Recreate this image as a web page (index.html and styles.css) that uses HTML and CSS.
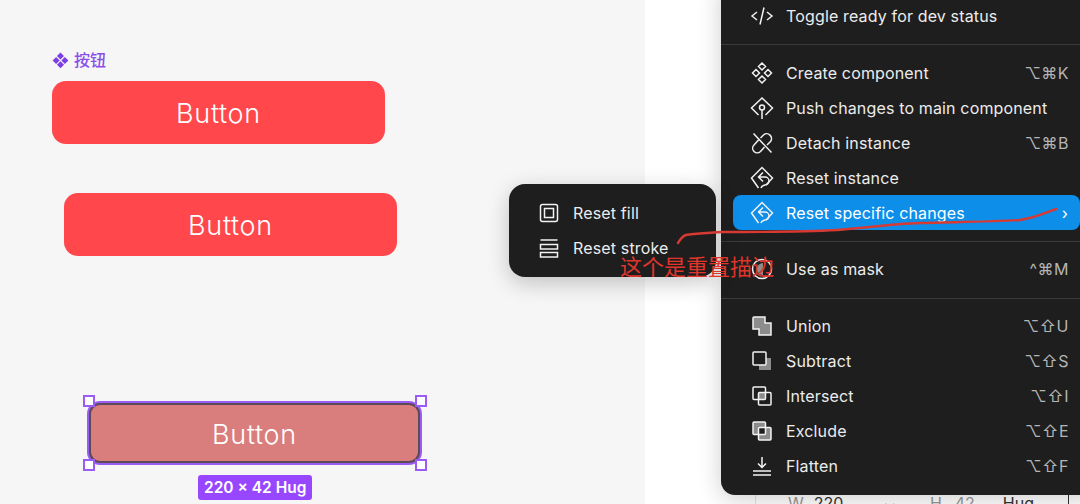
FILE: index.html
```html
<!DOCTYPE html>
<html lang="zh">
<head>
  <meta charset="UTF-8" />
  <title>Reset specific changes</title>
  <link rel="stylesheet" href="styles.css">
</head>
<body>

  <!-- ===== CANVAS ===== -->
  <div class="canvas">
    <div class="comp-label">
      <svg class="comp-icon" width="17" height="17" viewBox="0 0 16 16"><path d="M8 .5l3.300 3.300L8 7.100 4.700 3.800zM3.900 4.600l3.300 3.300-3.300 3.300L.6 7.900zM12.100 4.600l3.300 3.300-3.300 3.300-3.300-3.300zM8 8.700l3.300 3.300L8 15.300 4.700 12z" fill="#7b3fe4"/></svg>
      <span>按钮</span>
    </div>
    <div class="btn btn-one">Button</div>
    <div class="btn btn-two">Button</div>
    <div class="btn btn-selected">Button</div>
    <span class="handle h-tl"></span>
    <span class="handle h-tr"></span>
    <span class="handle h-bl"></span>
    <span class="handle h-br"></span>
    <div class="size-tag">220 × 42 Hug</div>
  </div>

  <!-- ===== PROPERTIES PANEL (behind the menu) ===== -->
  <div class="panel-strip">
    <span class="strip-w">W</span><span class="strip-val">220</span>
    <span class="strip-x">⌄</span>
    <span class="strip-h">H</span><span class="strip-val strip-dim">42</span>
    <span class="strip-hug">Hug</span>
    <span class="strip-box"></span>
  </div>

  <!-- ===== MAIN MENU ===== -->
  <div class="menu">
    <div class="row">
      <svg class="ico" viewBox="0 0 24 24"><path d="M7 8l-5 4 5 4M17 8l5 4-5 4M14 3.500l-4 17"/></svg>
      <span class="label">Toggle ready for dev status</span>
    </div>
    <hr>
    <div class="row">
      <svg class="ico" viewBox="0 0 24 24"><path d="M12 2l3.500 3.500L12 9 8.500 5.500zM6 8.500L9.500 12 6 15.500 2.500 12zM18 8.500l3.500 3.500-3.500 3.500-3.500-3.500zM12 15l3.500 3.500L12 22l-3.500-3.500z"/></svg>
      <span class="label">Create component</span>
      <span class="keys">⌥⌘K</span>
    </div>
    <div class="row">
      <svg class="ico" viewBox="0 0 24 24"><path d="M8.500 19L1.500 12 12 2l10.500 10-7 7M12 14v9"/><circle cx="12" cy="11.500" r="2.500"/></svg>
      <span class="label">Push changes to main component</span>
    </div>
    <div class="row">
      <svg class="ico" viewBox="0 0 24 24"><path d="M3.500 2.500l18 19M8.500 9l-4.500 5a4.500 4.500 0 0 0 6.500 6.500l4-4.500M10.500 7l3-3a4.800 4.800 0 0 1 7 6.500l-3.500 3.500"/></svg>
      <span class="label">Detach instance</span>
      <span class="keys">⌥⌘B</span>
    </div>
    <div class="row">
      <svg class="ico" viewBox="0 0 24 24"><use href="#reset-ico"/></svg>
      <span class="label">Reset instance</span>
    </div>
    <div class="row active">
      <svg class="ico" viewBox="0 0 24 24"><g id="reset-ico"><path d="M8.500 22L1.500 12 12 1.500 22.500 12 16 19"/><path d="M13 6.500L8.500 11l4.500 4.500M8.500 11H15a3.500 3.500 0 0 1 0 8c-2 .5-3.500 1-4 3"/></g></svg>
      <span class="label">Reset specific changes</span>
      <span class="chev">›</span>
    </div>
    <hr class="after-reset">
    <div class="row">
      <svg class="ico" viewBox="0 0 24 24"><circle cx="12" cy="12" r="9.500"/><path class="gray-fill" d="M13 6a6 6 0 0 0 0 12z"/></svg>
      <span class="label">Use as mask</span>
      <span class="keys">^⌘M</span>
    </div>
    <hr class="after-mask">
    <div class="row">
      <svg class="ico" viewBox="0 0 24 24"><path class="gray-fill" d="M3 3h12v6h6v12H9v-6H3z"/><path d="M9 15v6h12V9h-6V3H4a1 1 0 0 0-1 1v11z"/></svg>
      <span class="label">Union</span>
      <span class="keys">⌥⇧U</span>
    </div>
    <div class="row">
      <svg class="ico" viewBox="0 0 24 24"><path class="gray-fill" d="M16 9h5v12H9v-5h7z"/><rect x="3" y="3" width="13" height="13" rx="1"/></svg>
      <span class="label">Subtract</span>
      <span class="keys">⌥⇧S</span>
    </div>
    <div class="row">
      <svg class="ico" viewBox="0 0 24 24"><rect class="gray-fill" x="8.500" y="8.500" width="7" height="7"/><rect x="3" y="3" width="12.500" height="12.500" rx="1"/><rect x="8.500" y="8.500" width="12.500" height="12.500" rx="1"/></svg>
      <span class="label">Intersect</span>
      <span class="keys">⌥⇧I</span>
    </div>
    <div class="row">
      <svg class="ico" viewBox="0 0 24 24"><path class="gray-fill" d="M3 3h12.500v5.500h5.500V21H8.500v-5.500H3z"/><rect class="dark-fill" x="8.500" y="8.500" width="7" height="7"/><rect x="3" y="3" width="12.500" height="12.500" rx="1"/><rect x="8.500" y="8.500" width="12.500" height="12.500" rx="1"/></svg>
      <span class="label">Exclude</span>
      <span class="keys">⌥⇧E</span>
    </div>
    <div class="row">
      <svg class="ico" viewBox="0 0 24 24"><path d="M12 3v10M8 9.500l4 4 4-4M3 17h18M3 21h18"/></svg>
      <span class="label">Flatten</span>
      <span class="keys">⌥⇧F</span>
    </div>
  </div>

  <!-- ===== SUBMENU ===== -->
  <div class="submenu">
    <div class="row">
      <svg class="ico" viewBox="0 0 24 24"><rect x="3.500" y="3.500" width="17" height="17" rx="2"/><rect x="7.500" y="7.500" width="9" height="9"/></svg>
      <span class="label">Reset fill</span>
    </div>
    <div class="row">
      <svg class="ico" viewBox="0 0 24 24"><path d="M3.500 4h17"/><rect x="3.500" y="8.500" width="17" height="4.500"/><rect x="3.500" y="16.500" width="17" height="4.500"/></svg>
      <span class="label">Reset stroke</span>
    </div>
  </div>

  <!-- ===== ANNOTATION ===== -->
  <svg class="scribble" width="1080" height="504" viewBox="0 0 1080 504"><path d="M678 243C680 240 682 236 686 235 700 233 710 233 722 232 760 232 800 232 837 230 865 228 890 224 920 223 950 222 990 222 1020 220 1035 218 1045 213 1056 209"/></svg>
  <div class="note">这个是重置描边</div>

</body>
</html>
```

FILE: styles.css
```css
* {
  box-sizing: border-box;
  margin: 0;
  padding: 0;
}

body {
  position: relative;
  width: 1080px;
  height: 504px;
  overflow: hidden;
  background-color: #fff;
  font-family: Inter, "Noto Sans CJK SC", sans-serif;
}

.canvas {
  position: absolute;
  left: 0;
  top: 0;
  width: 645px;
  height: 504px;
  background-color: #f6f6f6;
}

.comp-label {
  position: absolute;
  left: 52px;
  top: 50px;
  display: flex;
  align-items: center;
  gap: 5px;
  color: #8a4fe8;
  font-size: 16px;
  font-weight: 500;
  line-height: 21px;
}

.btn {
  position: absolute;
  display: flex;
  align-items: center;
  justify-content: center;
  width: 333px;
  height: 63px;
  padding-top: 2px;
  border-radius: 14px;
  background-color: #ff474c;
  color: #fff;
  font-size: 27px;
  font-weight: 300;
  letter-spacing: 0.7px;
}

.btn-one {
  left: 52px;
  top: 81px;
}

.btn-two {
  left: 64px;
  top: 193px;
}

.btn-selected {
  left: 88px;
  top: 402px;
  height: 62px;
  background-color: #da7d7d;
  border: 3px solid #5a4a58;
  outline: 2px solid #9b5cf5;
  outline-offset: -1px;
  border-radius: 12px;
}

.handle {
  position: absolute;
  width: 12px;
  height: 12px;
  background-color: #fff;
  border: 2px solid #9b5cf5;
}

.h-tl { left: 83px; top: 395px; }
.h-tr { left: 415px; top: 395px; }
.h-bl { left: 83px; top: 459px; }
.h-br { left: 415px; top: 459px; }

.size-tag {
  position: absolute;
  left: 198px;
  top: 475px;
  height: 25px;
  padding: 0 6px;
  border-radius: 3px;
  background-color: #9747ff;
  color: #fff;
  font-size: 15.5px;
  font-weight: 600;
  line-height: 25px;
}

.panel-strip {
  position: absolute;
  left: 755px;
  top: 493px;
  display: flex;
  width: 325px;
  height: 11px;
  border-left: 1px solid #e3e3e3;
  font-size: 16px;
  line-height: 20px;
  color: #333;
}

.strip-w, .strip-h {
  color: #999;
}

.strip-w { margin-left: 32px; margin-right: 10px; }
.strip-h { margin-right: 13px; }
.strip-x { margin-left: 40px; margin-right: 34px; }
.strip-dim { color: #999; }
.strip-hug { margin-left: 28px; }

.strip-box {
  width: 12px;
  height: 11px;
  margin-left: 34px;
  border-left: 1px solid #333;
  border-top: 1px solid #333;
}

.menu {
  position: absolute;
  left: 721px;
  top: -20px;
  width: 380px;
  padding: 18px 0 12px;
  border-radius: 14px;
  background-color: #1e1e1e;
  box-shadow: 0 4px 24px rgba(0,0,0,0.2);
}

.menu hr {
  height: 1px;
  margin: 11px 0 10px;
  border: none;
  background-color: #3a3a3a;
}

.menu hr.after-reset {
  margin: 11px 0 9px;
}

.menu hr.after-mask {
  margin: 12px 0 9px;
}

.row {
  display: flex;
  align-items: center;
  gap: 12px;
  height: 35px;
  padding: 0 32px 0 29px;
  color: #ececec;
  font-size: 16px;
  letter-spacing: 0.15px;
}

.row .ico {
  flex: none;
  width: 24px;
  height: 24px;
  fill: none;
  stroke: #f2f2f2;
  stroke-width: 1.5;
}

.ico .gray-fill {
  fill: #8c8c8c;
  stroke: none;
}

.ico .dark-fill {
  fill: #1e1e1e;
  stroke: none;
}

.label {
  flex: 1;
  white-space: nowrap;
}

.keys {
  color: #b5b5b5;
  font-family: Inter, "DejaVu Sans", sans-serif;
  letter-spacing: 0.5px;
}

.active {
  margin-left: 12px;
  margin-right: 21px;
  padding: 0 32px 0 17px;
  border-radius: 8px;
  background-color: #0d8ee9;
  color: #fff;
}

.active .chev {
  margin-right: -20px;
  font-size: 16px;
}

.submenu {
  position: absolute;
  left: 509px;
  top: 184px;
  width: 207px;
  height: 93px;
  padding: 11px 0 0;
  border-radius: 16px;
  background-color: #1e1e1e;
  box-shadow: 0 6px 22px rgba(0,0,0,0.22);
}

.submenu .row {
  padding: 0 0 0 28px;
}

.scribble {
  position: absolute;
  left: 0;
  top: 0;
  fill: none;
  stroke: #d63a32;
  stroke-width: 2.4;
  stroke-linecap: round;
}

.note {
  position: absolute;
  left: 620px;
  top: 252px;
  color: #e0352b;
  font-size: 22px;
  font-weight: 400;
  line-height: 30px;
  white-space: nowrap;
}
```
